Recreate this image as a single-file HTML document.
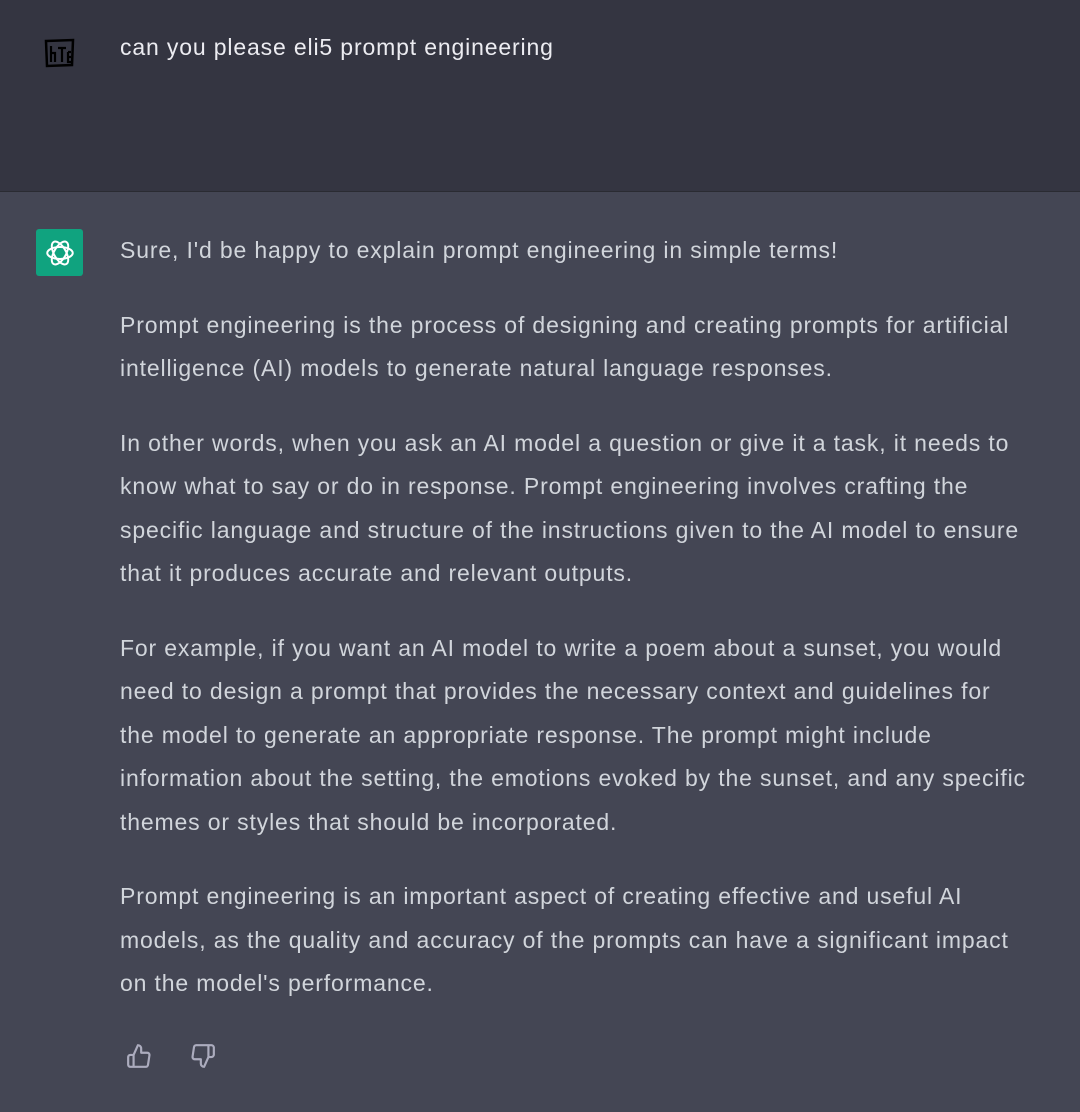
<!DOCTYPE html>
<html><head><meta charset="utf-8"><style>
*{margin:0;padding:0;box-sizing:border-box}
body{width:1080px;height:1112px;background:#444654;font-family:"Liberation Sans",sans-serif;overflow:hidden}
.top{height:192px;background:#343541;border-bottom:1px solid #2a2b32;position:relative}
.top .t{position:absolute;left:120px;top:34px;color:#ececf1;font-size:23px;letter-spacing:0.85px;white-space:nowrap}
.av1{position:absolute;left:44px;top:38px}
.bot{position:relative}
.av2{position:absolute;left:36px;top:37px;width:47px;height:47px;background:#10a37f;border-radius:3px;display:flex;align-items:center;justify-content:center}
.txt{position:absolute;left:120px;top:37px;color:#d1d5db;font-size:23px;letter-spacing:0.85px;line-height:43.5px;white-space:nowrap}
.txt p{margin-bottom:31px}
.icons{position:absolute;left:126px;top:851px;display:flex;gap:38px}
</style></head><body>
<div class="top">
<svg class="av1" width="31" height="30" viewBox="0 0 31 30"><path d="M2 3 L29 2 L28 27 L3 28 Z" fill="none" stroke="#000" stroke-width="2.5"/><path d="M7 8 V24 M7 15 H11 V24 M14 10 H22 M18 10 V24 M24 14 H27 M24 14 V24 H27 M24 19 H27" fill="none" stroke="#000" stroke-width="2.2"/></svg>
<div class="t">can you please eli5 prompt engineering</div>
</div>
<div class="bot">
<div class="av2"><svg width="34" height="34" viewBox="0 0 24 24" fill="none" stroke="#fff" stroke-width="1.4"><g transform="translate(12 12)"><ellipse rx="9" ry="4.2" transform="rotate(0)"/><ellipse rx="9" ry="4.2" transform="rotate(60)"/><ellipse rx="9" ry="4.2" transform="rotate(120)"/></g></svg></div>
<div class="txt">
<p>Sure, I'd be happy to explain prompt engineering in simple terms!</p>
<p>Prompt engineering is the process of designing and creating prompts for artificial<br>intelligence (AI) models to generate natural language responses.</p>
<p>In other words, when you ask an AI model a question or give it a task, it needs to<br>know what to say or do in response. Prompt engineering involves crafting the<br>specific language and structure of the instructions given to the AI model to ensure<br>that it produces accurate and relevant outputs.</p>
<p>For example, if you want an AI model to write a poem about a sunset, you would<br>need to design a prompt that provides the necessary context and guidelines for<br>the model to generate an appropriate response. The prompt might include<br>information about the setting, the emotions evoked by the sunset, and any specific<br>themes or styles that should be incorporated.</p>
<p>Prompt engineering is an important aspect of creating effective and useful AI<br>models, as the quality and accuracy of the prompts can have a significant impact<br>on the model's performance.</p>
</div>
<div class="icons">
<svg width="26" height="26" viewBox="0 0 24 24" fill="none" stroke="#acacbe" stroke-width="2" stroke-linecap="round" stroke-linejoin="round"><path d="M14 9V5a3 3 0 0 0-3-3l-4 9v11h11.28a2 2 0 0 0 2-1.7l1.38-9a2 2 0 0 0-2-2.3zM7 22H4a2 2 0 0 1-2-2v-7a2 2 0 0 1 2-2h3"/></svg>
<svg width="26" height="26" viewBox="0 0 24 24" fill="none" stroke="#acacbe" stroke-width="2" stroke-linecap="round" stroke-linejoin="round"><path d="M10 15v4a3 3 0 0 0 3 3l4-9V2H5.72a2 2 0 0 0-2 1.7l-1.38 9a2 2 0 0 0 2 2.3zm7-13h2.67A2.31 2.31 0 0 1 22 4v7a2.31 2.31 0 0 1-2.33 2H17"/></svg>
</div>
</div>
</body></html>
